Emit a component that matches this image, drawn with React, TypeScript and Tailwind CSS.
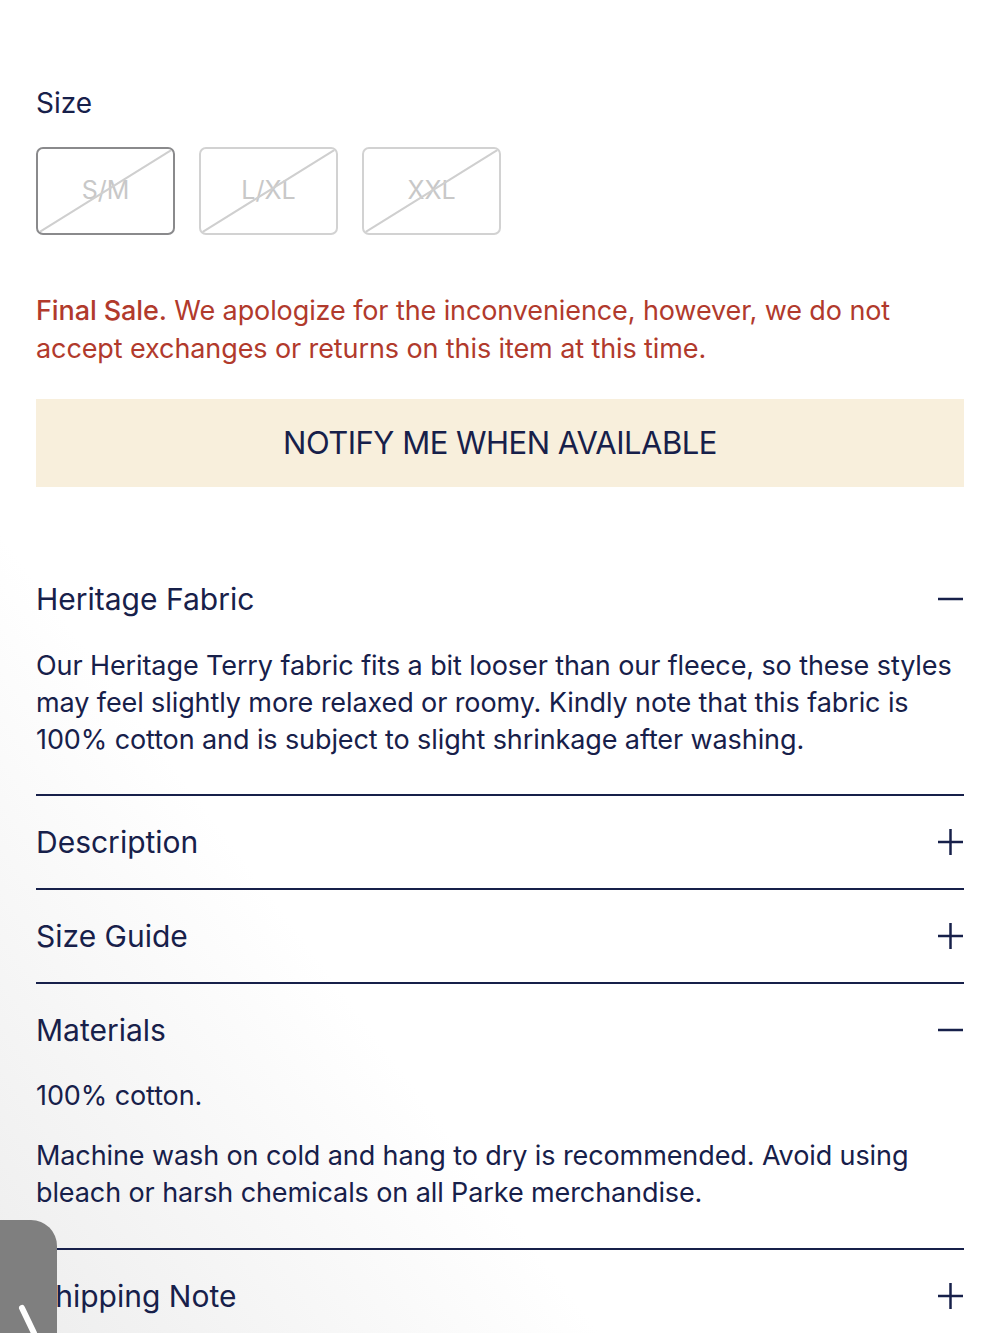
const sizes = ["S/M", "L/XL", "XXL"]

const Minus = () => (
  <svg width="28" height="28" viewBox="0 0 28 28" className="text-[#17204a]">
    <line x1="2" y1="14" x2="27" y2="14" stroke="currentColor" strokeWidth="2.5" />
  </svg>
)

const Plus = () => (
  <svg width="28" height="28" viewBox="0 0 28 28" className="text-[#17204a]">
    <line x1="2" y1="14" x2="27" y2="14" stroke="currentColor" strokeWidth="2.5" />
    <line x1="14.5" y1="1" x2="14.5" y2="27" stroke="currentColor" strokeWidth="2.5" />
  </svg>
)

const Row = ({ title, open }: { title: string; open?: boolean }) => (
  <div className="flex items-center justify-between">
    <h3 className="text-[30px] leading-[36px] text-[#17204a]">{title}</h3>
    {open ? <Minus /> : <Plus />}
  </div>
)

const App = () => {
  return (
    <div
      className="relative h-[1333px] w-[1000px] overflow-hidden bg-linear-to-tr from-[#ededed] via-white via-30% to-white"
      style={{ fontFamily: "Inter, 'Noto Sans', sans-serif" }}
    >
      <div className="px-[36px] pt-[85px]">
        <h2 className="text-[28px] leading-[36px] text-[#17204a]">Size</h2>

        <div className="mt-[26px] flex gap-[24px]">
          {sizes.map((s, i) => (
            <div
              key={s}
              className={`relative flex h-[88px] w-[139px] items-center justify-center overflow-hidden rounded-[7px] border-2 ${
                i === 0 ? "border-[#8a8a8c]" : "border-[#d2d2d2]"
              }`}
            >
              <span className="text-[25px] text-[#c8c8c8]">{s}</span>
              <svg className="absolute inset-0 h-full w-full" viewBox="0 0 100 100" preserveAspectRatio="none">
                <line x1="0" y1="100" x2="100" y2="0" stroke="#cfcfcf" strokeWidth="2" vectorEffect="non-scaling-stroke" />
              </svg>
            </div>
          ))}
        </div>

        <p className="mt-[57px] text-[27px] leading-[38px] tracking-[-0.1px] text-[#b13a2c]">
          <span className="font-medium">Final Sale.</span> We apologize for the inconvenience, however, we do not
          accept exchanges or returns on this item at this time.
        </p>

        <button className="mt-[31px] flex h-[88px] w-full items-center justify-center bg-[#f8efdc] text-[31px] tracking-[-0.5px] text-[#17204a]">
          NOTIFY ME WHEN AVAILABLE
        </button>

        <div className="mt-[94px]">
          <Row title="Heritage Fabric" open />
          <p className="mt-[30px] text-[27px] leading-[37px] tracking-[-0.1px] text-[#17204a]">
            Our Heritage Terry fabric fits a bit looser than our fleece, so these styles may feel slightly more relaxed or
            roomy. Kindly note that this fabric is 100% cotton and is subject to slight shrinkage after washing.
          </p>
        </div>

        <div className="mt-[36px] border-t-2 border-[#17204a] py-[28px]">
          <Row title="Description" />
        </div>
        <div className="border-t-2 border-[#17204a] py-[28px]">
          <Row title="Size Guide" />
        </div>
        <div className="border-t-2 border-[#17204a] pt-[28px] pb-[37px]">
          <Row title="Materials" open />
          <p className="mt-[29px] text-[27px] leading-[37px] tracking-[-0.1px] text-[#17204a]">100% cotton.</p>
          <p className="mt-[23px] text-[27px] leading-[37px] tracking-[-0.1px] text-[#17204a]">
            Machine wash on cold and hang to dry is recommended. Avoid using bleach or harsh chemicals on all Parke
            merchandise.
          </p>
        </div>
        <div className="border-t-2 border-[#17204a] py-[28px]">
          <Row title="Shipping Note" />
        </div>
      </div>

      <div className="absolute bottom-0 left-0 h-[113px] w-[57px] rounded-tr-[26px] bg-[#7f7f7f]">
        <svg className="absolute inset-0" width="57" height="113" viewBox="0 0 57 113">
          <line x1="22" y1="88" x2="34" y2="113" stroke="white" strokeWidth="6" strokeLinecap="round" />
        </svg>
      </div>
    </div>
  )
}

export default App
